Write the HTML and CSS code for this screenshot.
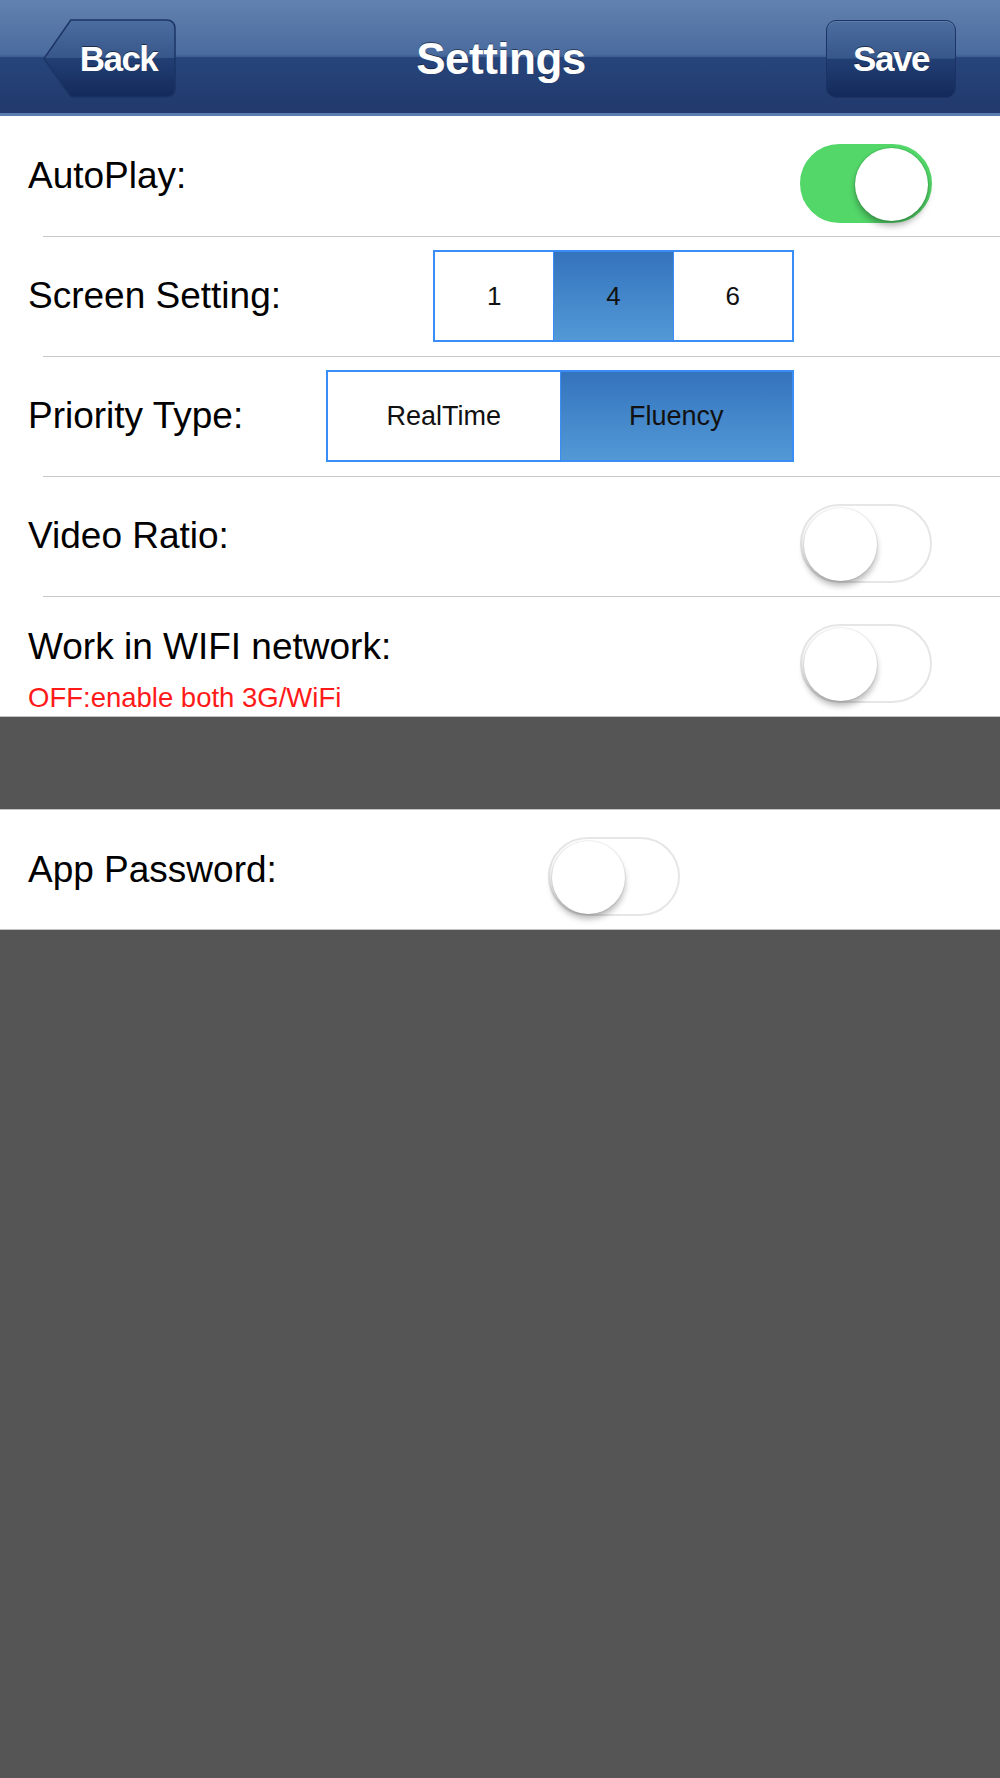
FILE: index.html
```html
<!DOCTYPE html>
<html>
<head>
    <meta http-equiv="Content-Type" content="text/html; charset=UTF-8"/>
    <title>Settings</title>
    <link rel="stylesheet" href="styles.css">
</head>
<body>

<div class="navbar">
    <a class="nav-btn back">
        <svg class="back-shape" viewBox="0 0 134 80" preserveAspectRatio="none">
            <defs>
                <linearGradient id="backGrad" x1="0" y1="0" x2="0" y2="1">
                    <stop offset="0" stop-color="#4c6da0"/>
                    <stop offset="0.49" stop-color="#37578b"/>
                    <stop offset="0.5" stop-color="#223f74"/>
                    <stop offset="1" stop-color="#132a5b"/>
                </linearGradient>
            </defs>
            <path d="M28 1 H124 Q133 1 133 10 V70 Q133 79 124 79 H28 L1 40 Z"
                  fill="url(#backGrad)" stroke="#1b3465" stroke-width="1.5"/>
        </svg>
        <span>Back</span>
    </a>
    <h1 class="nav-title">Settings</h1>
    <a class="nav-btn save"><span>Save</span></a>
</div>

<div class="group">
    <div class="row">
        <span class="label">AutoPlay:</span>
        <span class="switch on"><span class="knob"></span></span>
    </div>
    <div class="row">
        <span class="label">Screen Setting:</span>
        <div class="segmented seg-screen">
            <span class="seg">1</span>
            <span class="seg selected">4</span>
            <span class="seg">6</span>
        </div>
    </div>
    <div class="row">
        <span class="label">Priority Type:</span>
        <div class="segmented seg-priority">
            <span class="seg">RealTime</span>
            <span class="seg selected">Fluency</span>
        </div>
    </div>
    <div class="row">
        <span class="label">Video Ratio:</span>
        <span class="switch"><span class="knob"></span></span>
    </div>
    <div class="row row-top">
        <div class="label label-block">
            <div>Work in WIFI network:</div>
            <div class="hint">OFF:enable both 3G/WiFi</div>
        </div>
        <span class="switch"><span class="knob"></span></span>
    </div>
</div>

<div class="spacer"></div>

<div class="group group-last">
    <div class="row">
        <span class="label">App Password:</span>
        <span class="switch switch-near"><span class="knob"></span></span>
    </div>
</div>

</body>
</html>
```

FILE: styles.css
```css
html, body {
margin: 0;
padding: 0;
}

body {
background: #555555;
font-family: "Liberation Sans", Arial, Helvetica, sans-serif;
color: #000;
min-height: 1778px;
}

/* top bar */
.navbar {
height: 116px;
box-sizing: border-box;
padding: 4px 44px 0 43px;
display: flex;
align-items: center;
justify-content: space-between;
background: linear-gradient(to bottom, #6282b0 0%, #4a6b9e 48%, #3e5f92 50%, #27457b 51%, #21396c 100%);
border-bottom: 3px solid #5a7daf;
box-shadow: 0 1px 0 #b3aca4;
}

.nav-title {
margin: 0;
font-size: 44px;
font-weight: bold;
letter-spacing: -0.5px;
color: #fff;
text-shadow: 0 -1px 0 rgba(0, 0, 0, 0.45);
}

.nav-btn {
height: 79px;
display: flex;
align-items: center;
justify-content: center;
box-sizing: border-box;
font-size: 35px;
font-weight: bold;
letter-spacing: -1.5px;
color: #fff;
text-shadow: 0 -1px 0 rgba(0, 0, 0, 0.5);
}

.back {
position: relative;
width: 133px;
padding-left: 18px;
}

.back-shape {
position: absolute;
left: 0;
top: 0;
width: 133px;
height: 79px;
}

.back span {
position: relative;
}

.save {
width: 130px;
height: 78px;
border: 1px solid #1b3465;
border-radius: 10px;
background: linear-gradient(to bottom, #4c6da0 0%, #37578b 49%, #223f74 50%, #132a5b 100%);
box-shadow: inset 0 1px 0 rgba(255, 255, 255, 0.12);
}

/* settings rows */
.group {
background: #fff;
}

.group-last {
border-bottom: 1px solid #c4c4c4;
}

.row {
height: 120px;
box-sizing: border-box;
display: flex;
align-items: center;
padding-left: 28px;
}

.row + .row {
background: linear-gradient(#c8c7cc, #c8c7cc) 43px 0 / 100% 1px no-repeat;
}

.group-last .row {
height: 119px;
}

.label {
font-size: 37px;
}

.row-top {
align-items: flex-start;
}

.label-block {
margin-top: 30px;
}

.hint {
margin-top: 14px;
font-size: 27.5px;
color: #ff1a1a;
}

.spacer {
height: 92px;
border-top: 1px solid #c4c4c4;
border-bottom: 1px solid #c4c4c4;
}

/* switches */
.switch {
display: flex;
width: 132px;
height: 79px;
box-sizing: border-box;
margin: 14px 68px 0 auto;
padding: 2px;
border-radius: 40px;
border: 2px solid #e6e6e6;
background: #fff;
}

.row-top .switch {
margin-top: 28px;
}

.switch .knob {
width: 73px;
height: 73px;
border-radius: 50%;
background: #fff;
box-shadow: 0 0 0 1px rgba(0, 0, 0, 0.06), 0 5px 6px rgba(0, 0, 0, 0.28);
}

.switch.on {
background: #53d769;
border-color: #53d769;
justify-content: flex-end;
}

.switch.on .knob {
box-shadow: 0 0 0 1px rgba(0, 90, 20, 0.15), 0 5px 6px rgba(0, 0, 0, 0.3);
}

.switch-near {
margin-right: 320px;
}

/* segmented controls */
.segmented {
display: flex;
height: 92px;
box-sizing: border-box;
margin: 0 206px 0 auto;
border: 2px solid #3a8cf7;
}

.seg-screen {
width: 361px;
}

.seg-priority {
width: 468px;
}

.seg {
flex: 1;
display: flex;
align-items: center;
justify-content: center;
font-size: 26px;
color: #111;
background: #fff;
}

.seg-priority .seg {
font-size: 27px;
}

.seg + .seg {
border-left: 1px solid #3a8cf7;
}

.seg.selected {
background: linear-gradient(to bottom, #3473bd, #5299d6);
}
```
